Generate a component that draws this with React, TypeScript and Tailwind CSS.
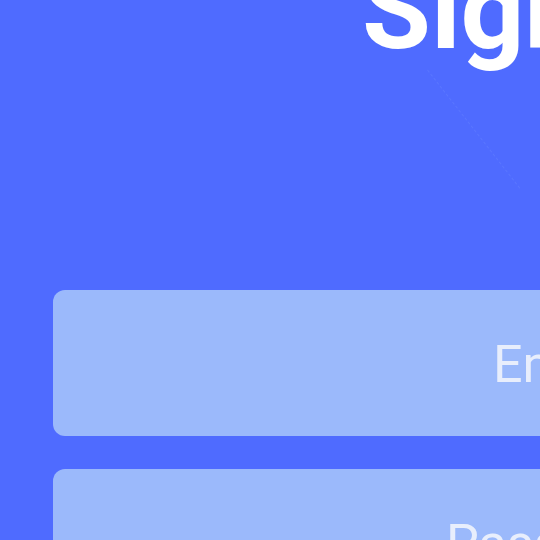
export default function App() {
    return (
        <div
            className="relative h-[540px] w-[540px] overflow-hidden bg-[#4f6bff]"
            style={{ fontFamily: "Roboto, 'Noto Sans', sans-serif" }}
        >
            <div className="w-[1200px]">
                <h1 className="mt-[-46px] pl-[362px] text-[112px] font-bold leading-none text-white">
                    Sign In
                </h1>

                {/* faint decoration under the title */}
                <div className="ml-[427px] mt-[4px] h-[150px] w-px origin-top rotate-[-38deg] border-l border-dashed border-[#5a76ff]" />

                <div className="mt-[70px] flex flex-col gap-[33px] pl-[53px]">
                    <div className="flex h-[146px] w-[900px] items-center rounded-[12px] bg-[#9bb9fb] pl-[440px]">
                        <span className="pt-[4px] text-[52px] leading-none text-[#e8eefc]">
                            Email
                        </span>
                    </div>
                    <div className="flex h-[146px] w-[900px] items-center rounded-[12px] bg-[#9bb9fb] pl-[393px]">
                        <span className="pt-[4px] text-[52px] leading-none text-[#e8eefc]">
                            Password
                        </span>
                    </div>
                </div>
            </div>
        </div>
    );
}
